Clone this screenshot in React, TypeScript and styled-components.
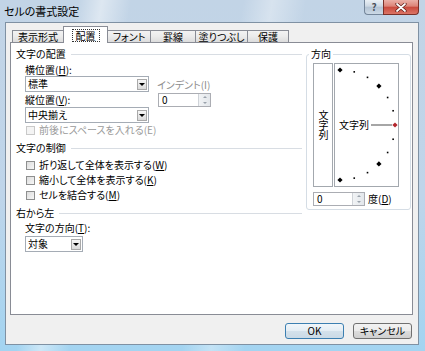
import styled, { createGlobalStyle } from "styled-components";

const GlobalStyle = createGlobalStyle`
  html, body {
    margin: 0;
    padding: 0;
    background: #fff;
  }
  body {
    font-family: "Noto Sans CJK JP", "Noto Sans", sans-serif;
    font-size: 10px;
    font-feature-settings: "palt";
    color: #000;
  }
`;

//window frame
const Frame = styled.div`
  width: 425px;
  height: 351px;
  box-sizing: border-box;
  display: flex;
  flex-direction: column;
  padding: 0 6px 6px 5px;
  overflow: hidden;
  background: linear-gradient(
      100deg,
      transparent 16%,
      rgba(255, 255, 255, 0.45) 21%,
      transparent 27%,
      transparent 50%,
      rgba(255, 255, 255, 0.35) 56%,
      transparent 63%
    ),
    linear-gradient(180deg, #c2d4e6 0%, #bfd5ea 55%, #a3d4f1 100%);
`;

const TitleBar = styled.div`
  height: 22px;
  display: flex;
  justify-content: space-between;
  align-items: flex-start;
`;

const Title = styled.span`
  font-size: 11px;
  line-height: 23px;
  margin-left: -1px;
`;

const CaptionButtons = styled.div`
  display: flex;
  height: 15px;
`;

const HelpButton = styled.div`
  width: 19px;
  box-sizing: border-box;
  border: 1px solid #74869a;
  border-top: none;
  border-right: none;
  border-radius: 0 0 0 4px;
  background: linear-gradient(#eaf0f5, #cdd8e3 45%, #b3c3d3 50%, #ccd9e6);
  color: #4a525c;
  font-weight: bold;
  font-size: 10px;
  line-height: 14px;
  text-align: center;
`;

const CloseButton = styled.div`
  width: 36px;
  box-sizing: border-box;
  border: 1px solid #7a3129;
  border-top: none;
  border-radius: 0 0 4px 0;
  background: linear-gradient(#eab0a7, #dc8377 45%, #c9493c 50%, #db7465);
  display: flex;
  align-items: center;
  justify-content: center;
`;

const Client = styled.div`
  flex: 1;
  display: flex;
  flex-direction: column;
  background: #f0f0f0;
  border: 1px solid #7f91a3;
  padding: 4px 5px 5px 4px;
`;

//tabs
const TabStrip = styled.div`
  display: flex;
  align-items: flex-end;
  height: 16px;
  padding-left: 2px;
  margin-bottom: -1px;
  position: relative;
  z-index: 1;
`;

const Tab = styled.div<{ $w: number; $active?: boolean }>`
  width: ${(p) => p.$w}px;
  height: ${(p) => (p.$active ? 17 : 13)}px;
  box-sizing: border-box;
  margin-right: -1px;
  border: 1px solid #898c95;
  border-bottom: ${(p) => (p.$active ? "none" : "1px solid #898c95")};
  background: ${(p) =>
    p.$active ? "#fff" : "linear-gradient(#f3f3f3, #ebebeb 50%, #dcdcdc)"};
  display: flex;
  justify-content: center;
  align-items: ${(p) => (p.$active ? "flex-start" : "center")};
  padding-top: ${(p) => (p.$active ? 2 : 0)}px;
  line-height: 11px;
  position: relative;
  z-index: ${(p) => (p.$active ? 2 : 0)};
`;

const FocusMark = styled.span`
  border: 1px dotted #333;
  padding: 0 3px;
`;

const Panel = styled.div`
  flex: 1;
  background: #fff;
  border: 1px solid #898c95;
  display: grid;
  grid-template-columns: 1fr 105px;
  column-gap: 4px;
  align-items: start;
  padding: 4px 1px 0 5px;
`;

const LeftColumn = styled.div`
  display: flex;
  flex-direction: column;
`;

const SectionHeader = styled.div<{ $gap?: number }>`
  display: flex;
  align-items: center;
  height: 14px;
  line-height: 14px;
  margin-top: ${(p) => p.$gap ?? 0}px;
  &::after {
    content: "";
    flex: 1;
    border-top: 1px solid #d8dde3;
    margin-left: 5px;
  }
`;

const AlignGrid = styled.div`
  display: grid;
  grid-template-columns: 124px 53px;
  column-gap: 9px;
  margin-left: 9px;
`;

const FieldLabel = styled.div<{ $gap?: number; $indent?: number }>`
  height: 13px;
  line-height: 13px;
  margin-top: ${(p) => p.$gap ?? 0}px;
  margin-left: ${(p) => p.$indent ?? 0}px;
`;

const MutedLabel = styled.div`
  align-self: center;
  color: #8d8d8d;
  line-height: 13px;
  margin-left: -1px;
  white-space: nowrap;
`;

const Select = styled.div<{ $w: number; $gap?: number }>`
  width: ${(p) => p.$w}px;
  height: 16px;
  box-sizing: border-box;
  margin-top: ${(p) => p.$gap ?? 0}px;
  border: 1px solid #a5acb5;
  background: #fff;
  display: flex;
  align-items: center;
  justify-content: space-between;
  padding: 0 1px 0 2px;
  line-height: 14px;
`;

const DropButton = styled.span`
  width: 10px;
  height: 11px;
  box-sizing: border-box;
  border: 1px solid #a9a9a9;
  background: linear-gradient(#f6f6f6, #dadada);
  display: flex;
  align-items: center;
  justify-content: center;
  &::after {
    content: "";
    border-left: 3px solid transparent;
    border-right: 3px solid transparent;
    border-top: 3px solid #000;
  }
`;

const Spinner = styled.div<{ $w: number; $gap?: number }>`
  width: ${(p) => p.$w}px;
  height: 14px;
  box-sizing: border-box;
  margin-top: ${(p) => p.$gap ?? 0}px;
  border: 1px solid #abadb3;
  background: #fff;
  display: flex;
  justify-content: space-between;
`;

const SpinValue = styled.span`
  padding-left: 3px;
  line-height: 12px;
`;

const SpinArrows = styled.span`
  width: 11px;
  display: flex;
  flex-direction: column;
  border-left: 1px solid #cfd3d8;
  background: linear-gradient(90deg, #f1f3f5, #e3e7eb);
`;

const SpinArrow = styled.span<{ $down?: boolean }>`
  flex: 1;
  display: flex;
  align-items: center;
  justify-content: center;
  &::after {
    content: "";
    border-left: 2px solid transparent;
    border-right: 2px solid transparent;
    ${(p) =>
      p.$down ? "border-top: 2px solid #9aa2ab;" : "border-bottom: 2px solid #9aa2ab;"}
  }
`;

const CheckRow = styled.div<{ $gap?: number; $disabled?: boolean }>`
  display: flex;
  align-items: center;
  gap: 4px;
  height: 14px;
  line-height: 14px;
  margin-left: 10px;
  margin-top: ${(p) => p.$gap ?? 0}px;
  color: ${(p) => (p.$disabled ? "#9a9a9a" : "#000")};
`;

const CheckBox = styled.span<{ $disabled?: boolean }>`
  width: 9px;
  height: 9px;
  box-sizing: border-box;
  border: 1px solid ${(p) => (p.$disabled ? "#c9c9c9" : "#8e8f8f")};
  background: ${(p) =>
    p.$disabled ? "#f4f4f4" : "linear-gradient(135deg, #dcdcdc, #f7f7f7)"};
`;

//orientation group
const GroupBox = styled.fieldset`
  margin: 0;
  min-width: 0;
  border: 1px solid #d5dde5;
  border-radius: 3px;
  padding: 0 5px 3px 6px;
`;

const GroupLegend = styled.legend`
  margin-left: -4px;
  padding: 0 2px;
  line-height: 14px;
`;

const DialRow = styled.div`
  display: flex;
  gap: 1px;
  margin-top: 2px;
`;

const VerticalBox = styled.div`
  width: 20px;
  height: 124px;
  box-sizing: border-box;
  border: 1px solid #a3a8ae;
  display: flex;
  align-items: center;
  justify-content: center;
  writing-mode: vertical-rl;
  text-orientation: upright;
  line-height: 12px;
`;

const ArcBox = styled.div`
  width: 65px;
  height: 124px;
  box-sizing: border-box;
  border: 1px solid #a3a8ae;
  position: relative;
  display: flex;
  align-items: center;
  padding-left: 4px;
`;

const ArcDrawing = styled.svg`
  position: absolute;
  inset: 0;
`;

const DialText = styled.span`
  position: relative;
  line-height: 12px;
  background: #fff;
`;

const DegreeRow = styled.div`
  display: flex;
  align-items: center;
  gap: 3px;
  margin-top: 4px;
`;

//footer buttons
const ButtonBar = styled.div`
  display: flex;
  justify-content: flex-end;
  gap: 9px;
  margin-top: 8px;
  padding-right: 1px;
`;

const Button = styled.div<{ $default?: boolean }>`
  width: 59px;
  height: 16px;
  box-sizing: border-box;
  border: 1px solid ${(p) => (p.$default ? "#3c7fb1" : "#707070")};
  border-radius: 3px;
  background: ${(p) =>
    p.$default
      ? "linear-gradient(#f1f6fa, #e4edf4 50%, #d4e1eb 51%, #cbdae6)"
      : "linear-gradient(#f2f2f2, #ebebeb 50%, #dddddd 51%, #cfcfcf)"};
  display: flex;
  align-items: center;
  justify-content: center;
  line-height: 12px;
`;

const tabs = [
  { label: "表示形式", w: 52 },
  { label: "配置", w: 45, active: true },
  { label: "フォント", w: 44 },
  { label: "罫線", w: 46 },
  { label: "塗りつぶし", w: 53 },
  { label: "保護", w: 42 },
];

const CX = 5;
const CY = 61;
const R = 55;
const dialPoints = Array.from({ length: 13 }, (_, i) => {
  const deg = 90 - i * 15;
  const rad = (deg * Math.PI) / 180;
  return { deg, x: CX + R * Math.cos(rad), y: CY - R * Math.sin(rad) };
});

function App() {
  return (
    <>
      <GlobalStyle />
      <Frame>
        <TitleBar>
          <Title>セルの書式設定</Title>
          <CaptionButtons>
            <HelpButton>?</HelpButton>
            <CloseButton>
              <svg width="12" height="9" viewBox="0 0 12 9">
                <path
                  d="M2 1 L10 8 M10 1 L2 8"
                  stroke="#5a1a14"
                  strokeWidth="3.2"
                  strokeLinecap="round"
                />
                <path
                  d="M2 1 L10 8 M10 1 L2 8"
                  stroke="#fff"
                  strokeWidth="1.8"
                  strokeLinecap="round"
                />
              </svg>
            </CloseButton>
          </CaptionButtons>
        </TitleBar>
        <Client>
          <TabStrip>
            {tabs.map((t) => (
              <Tab key={t.label} $w={t.w} $active={t.active}>
                {t.active ? <FocusMark>{t.label}</FocusMark> : t.label}
              </Tab>
            ))}
          </TabStrip>
          <Panel>
            <LeftColumn>
              <SectionHeader>文字の配置</SectionHeader>
              <AlignGrid>
                <FieldLabel $gap={2}>
                  横位置(<u>H</u>):
                </FieldLabel>
                <div />
                <Select $w={124}>
                  標準
                  <DropButton />
                </Select>
                <MutedLabel>インデント(I)</MutedLabel>
                <FieldLabel $gap={1}>
                  縦位置(<u>V</u>):
                </FieldLabel>
                <Spinner $w={53} $gap={1}>
                  <SpinValue>0</SpinValue>
                  <SpinArrows>
                    <SpinArrow />
                    <SpinArrow $down />
                  </SpinArrows>
                </Spinner>
                <Select $w={124}>
                  中央揃え
                  <DropButton />
                </Select>
              </AlignGrid>
              <CheckRow $disabled>
                <CheckBox $disabled />
                前後にスペースを入れる(E)
              </CheckRow>

              <SectionHeader $gap={4}>文字の制御</SectionHeader>
              <CheckRow $gap={3}>
                <CheckBox />
                <span>
                  折り返して全体を表示する(<u>W</u>)
                </span>
              </CheckRow>
              <CheckRow $gap={1}>
                <CheckBox />
                <span>
                  縮小して全体を表示する(<u>K</u>)
                </span>
              </CheckRow>
              <CheckRow $gap={1}>
                <CheckBox />
                <span>
                  セルを結合する(<u>M</u>)
                </span>
              </CheckRow>

              <SectionHeader $gap={4}>右から左</SectionHeader>
              <FieldLabel $gap={1} $indent={9}>
                文字の方向(<u>T</u>):
              </FieldLabel>
              <div style={{ marginLeft: 9 }}>
                <Select $w={58} $gap={2}>
                  対象
                  <DropButton />
                </Select>
              </div>
            </LeftColumn>

            <GroupBox>
              <GroupLegend>方向</GroupLegend>
              <DialRow>
                <VerticalBox>文字列</VerticalBox>
                <ArcBox>
                  <ArcDrawing width="63" height="122" viewBox="0 0 63 122">
                    <line
                      x1="36"
                      y1={CY}
                      x2="57"
                      y2={CY}
                      stroke="#808080"
                      strokeWidth="1.4"
                    />
                    {dialPoints.map((p) =>
                      p.deg % 45 === 0 ? (
                        <polygon
                          key={p.deg}
                          points={`${p.x},${p.y - 2.6} ${p.x + 2.6},${p.y} ${p.x},${p.y + 2.6} ${p.x - 2.6},${p.y}`}
                          fill={p.deg === 0 ? "#b3262c" : "#000"}
                        />
                      ) : (
                        <rect
                          key={p.deg}
                          x={p.x - 0.8}
                          y={p.y - 0.8}
                          width="1.6"
                          height="1.6"
                          fill="#000"
                        />
                      )
                    )}
                  </ArcDrawing>
                  <DialText>文字列</DialText>
                </ArcBox>
              </DialRow>
              <DegreeRow>
                <Spinner $w={52}>
                  <SpinValue>0</SpinValue>
                  <SpinArrows>
                    <SpinArrow />
                    <SpinArrow $down />
                  </SpinArrows>
                </Spinner>
                <span>
                  度(<u>D</u>)
                </span>
              </DegreeRow>
            </GroupBox>
          </Panel>
          <ButtonBar>
            <Button $default>OK</Button>
            <Button>キャンセル</Button>
          </ButtonBar>
        </Client>
      </Frame>
    </>
  );
}

export default App;
